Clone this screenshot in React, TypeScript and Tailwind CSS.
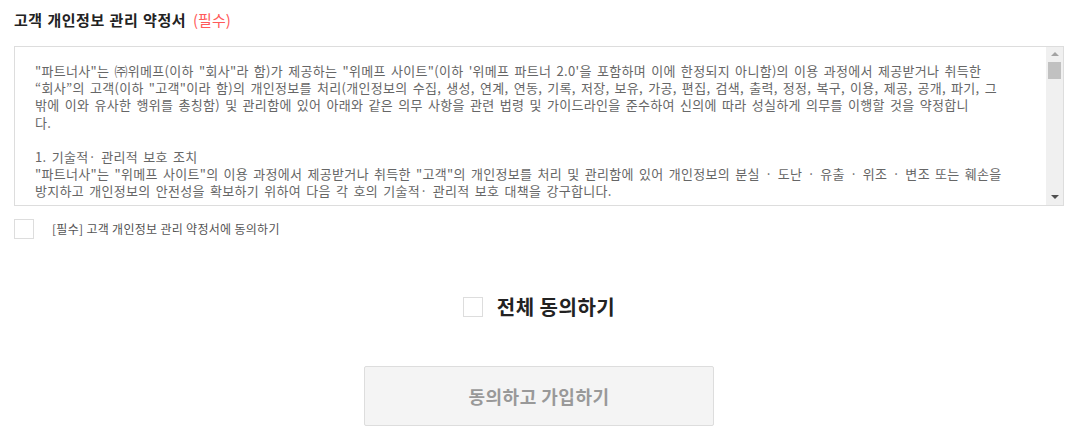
import { useState } from "react";

const FONT = "font-['Noto_Sans_CJK_KR','Malgun_Gothic',sans-serif]";

function CheckBox({ checked, onChange }: { checked: boolean; onChange: () => void }) {
  return (
    <button
      type="button"
      onClick={onChange}
      className="h-5 w-5 shrink-0 border border-[#dddddd] bg-white"
      aria-pressed={checked}
    >
      {checked ? <span className="block h-full w-full bg-[#f55c5c]" /> : null}
    </button>
  );
}

const TERMS = [
  `"파트너사"는 ㈜위메프(이하 "회사"라 함)가 제공하는 "위메프 사이트"(이하 '위메프 파트너 2.0'을 포함하며 이에 한정되지 아니함)의 이용 과정에서 제공받거나 취득한`,
  `“회사”의 고객(이하 "고객"이라 함)의 개인정보를 처리(개인정보의 수집, 생성, 연계, 연동, 기록, 저장, 보유, 가공, 편집, 검색, 출력, 정정, 복구, 이용, 제공, 공개, 파기, 그`,
  `밖에 이와 유사한 행위를 총칭함) 및 관리함에 있어 아래와 같은 의무 사항을 관련 법령 및 가이드라인을 준수하여 신의에 따라 성실하게 의무를 이행할 것을 약정합니`,
  `다.`,
  ``,
  `1. 기술적· 관리적 보호 조치`,
  `"파트너사"는 "위메프 사이트"의 이용 과정에서 제공받거나 취득한 "고객"의 개인정보를 처리 및 관리함에 있어 개인정보의 분실 · 도난 · 유출 · 위조 · 변조 또는 훼손을`,
  `방지하고 개인정보의 안전성을 확보하기 위하여 다음 각 호의 기술적· 관리적 보호 대책을 강구합니다.`,
  ``,
];

export default function App() {
  const [agreeTerms, setAgreeTerms] = useState(false);
  const [agreeAll, setAgreeAll] = useState(false);

  return (
    <div className={`${FONT} h-[436px] w-[1083px] bg-white pl-[14px] pt-[10px] text-[#333]`}>
      <div className="w-[1050px]">
        <h2 className="flex items-baseline gap-[7px] text-[15px] font-bold leading-[20px] text-[#222]">
          <span className="tracking-[0.5px] [word-spacing:1px]">고객 개인정보 관리 약정서</span>
          <span className="font-normal text-[#ff5a5a]">(필수)</span>
        </h2>

        <div className="mt-[16px] flex h-[160px] border border-[#dddddd]">
          <div className="flex-1 overflow-hidden whitespace-nowrap px-[20px] pt-[15px] text-[13px] leading-[17.2px] tracking-[0.3px] [word-spacing:2px] text-[#666]">
            {TERMS.map((line, i) => (
              <p key={i} className="h-[17.2px]">
                {line}
              </p>
            ))}
          </div>
          <div className="flex w-[17px] flex-col items-center bg-[#f0f0f0]">
            <span className="mt-[5px] h-0 w-0 border-x-[4px] border-b-[4px] border-x-transparent border-b-[#a3a3a3]" />
            <span className="mt-[6px] h-[17px] w-[13px] bg-[#c1c1c1]" />
            <span className="mt-auto mb-[6px] h-0 w-0 border-x-[4px] border-t-[4px] border-x-transparent border-t-[#505050]" />
          </div>
        </div>

        <label className="mt-[13px] flex items-center gap-[18px] text-[12px] tracking-[0.3px] text-[#555]">
          <CheckBox checked={agreeTerms} onChange={() => setAgreeTerms(!agreeTerms)} />
          <span>[필수] 고객 개인정보 관리 약정서에 동의하기</span>
        </label>

        <div className="mt-[56px] flex items-center justify-center gap-[14px]">
          <CheckBox checked={agreeAll} onChange={() => setAgreeAll(!agreeAll)} />
          <span className="text-[20px] font-bold leading-[24px] tracking-[0.5px] text-[#222]">전체 동의하기</span>
        </div>

        <div className="mt-[47px] flex justify-center">
          <button
            type="button"
            className="h-[60px] w-[350px] rounded-[2px] border border-[#dddddd] bg-[#f4f4f4] text-[18px] font-bold tracking-[0.5px] text-[#999]"
          >
            동의하고 가입하기
          </button>
        </div>
      </div>
    </div>
  );
}
